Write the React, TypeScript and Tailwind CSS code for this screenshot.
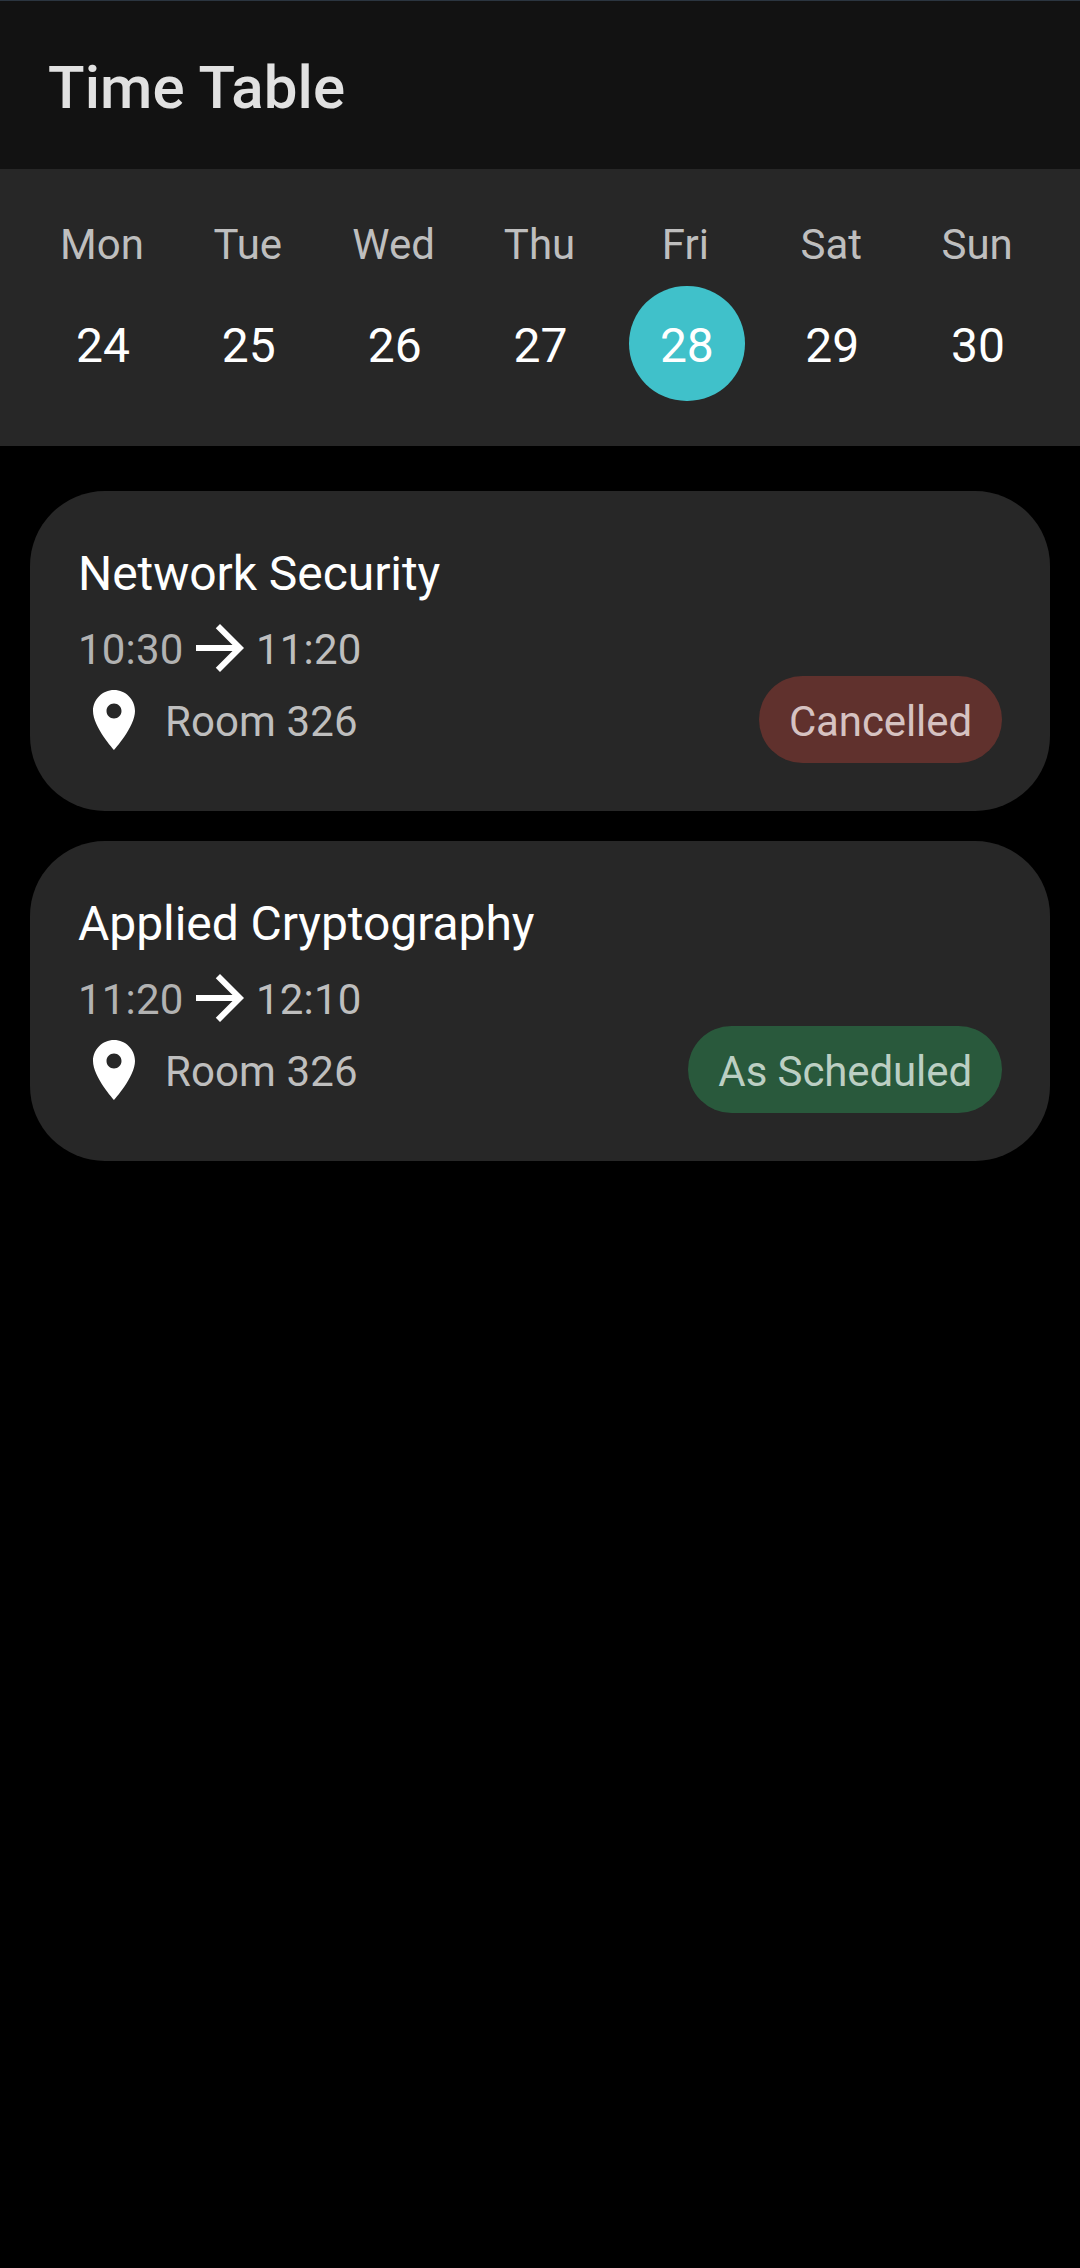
type Session = {
  title: string;
  start: string;
  end: string;
  room: string;
  status: string;
  badge: string;
};

const days = [
  { name: "Mon", date: 24 },
  { name: "Tue", date: 25 },
  { name: "Wed", date: 26 },
  { name: "Thu", date: 27 },
  { name: "Fri", date: 28 },
  { name: "Sat", date: 29 },
  { name: "Sun", date: 30 },
];

const selectedDate = 28;

const sessions: Session[] = [
  {
    title: "Network Security",
    start: "10:30",
    end: "11:20",
    room: "Room 326",
    status: "Cancelled",
    badge: "bg-[#60312d] text-[#d6c2c1]",
  },
  {
    title: "Applied Cryptography",
    start: "11:20",
    end: "12:10",
    room: "Room 326",
    status: "As Scheduled",
    badge: "bg-[#29593c] text-[#bccfc3]",
  },
];

function ArrowIcon() {
  return (
    <svg viewBox="0 0 24 24" className="size-[72px] shrink-0 fill-white">
      <path d="M12 4l-1.41 1.41L16.17 11H4v2h12.17l-5.58 5.59L12 20l8-8z" />
    </svg>
  );
}

function PinIcon() {
  return (
    <svg viewBox="0 0 24 24" className="size-[72px] shrink-0 fill-white">
      <path d="M12 2C8.13 2 5 5.13 5 9c0 5.25 7 13 7 13s7-7.75 7-13c0-3.87-3.13-7-7-7zm0 9.5c-1.38 0-2.5-1.12-2.5-2.5s1.12-2.5 2.5-2.5 2.5 1.12 2.5 2.5-1.12 2.5-2.5 2.5z" />
    </svg>
  );
}

function Day({ name, date }: { name: string; date: number }) {
  return (
    <div className="flex flex-1 flex-col items-center">
      <span className="text-[42px] leading-[49px] text-[#bebebe]">{name}</span>
      <span
        className={
          date === selectedDate
            ? "ml-[3px] mt-[17px] h-[115px] w-[116px] rounded-full bg-[#40c1ca] text-center text-5xl leading-[119px]"
            : "ml-0.5 mt-[17px] h-[115px] w-[116px] text-center text-5xl leading-[119px]"
        }
      >
        {date}
      </span>
    </div>
  );
}

function SessionCard({ session }: { session: Session }) {
  return (
    <article className="flex h-[320px] items-end justify-between rounded-[75px] bg-[#272727] p-12">
      <div className="flex h-full flex-col">
        <h2 className="mb-1 h-[69px] text-5xl leading-[69px] tracking-[-0.06px]">{session.title}</h2>
        <div className="flex h-[72px] text-[42px] leading-[75px] tracking-[0.2px]">
          <span className="w-[106px] text-[#b2b2b2]">{session.start}</span>
          <ArrowIcon />
          <span className="text-[#bebebe]">{session.end}</span>
        </div>
        <div className="flex h-[72px] gap-[15px] text-[42px] leading-[75px] tracking-[0.1px] text-[#bebebe]">
          <PinIcon />
          <span>{session.room}</span>
        </div>
      </div>
      <span className={`h-[87px] rounded-full px-[30px] text-[42px] leading-[91px] tracking-[-0.1px] ${session.badge}`}>
        {session.status}
      </span>
    </article>
  );
}

export default function App() {
  return (
    <main className="flex h-[2268px] w-[1080px] flex-col overflow-hidden bg-black font-[Roboto,sans-serif] text-white">
      <header className="h-[169px] border-t border-[#2b3540] bg-[#121212] px-12">
        <h1 className="text-[60px] leading-[173px] font-medium tracking-[0.12px] text-[#e1e1e1]">Time Table</h1>
      </header>
      <nav className="flex h-[277px] bg-[#272727] pt-[51px] pr-[30px] pl-[29px]">
        {days.map((day) => (
          <Day key={day.name} name={day.name} date={day.date} />
        ))}
      </nav>
      <section className="flex flex-col gap-[30px] px-[30px] pt-[45px]">
        {sessions.map((session) => (
          <SessionCard key={session.title} session={session} />
        ))}
      </section>
    </main>
  );
}
